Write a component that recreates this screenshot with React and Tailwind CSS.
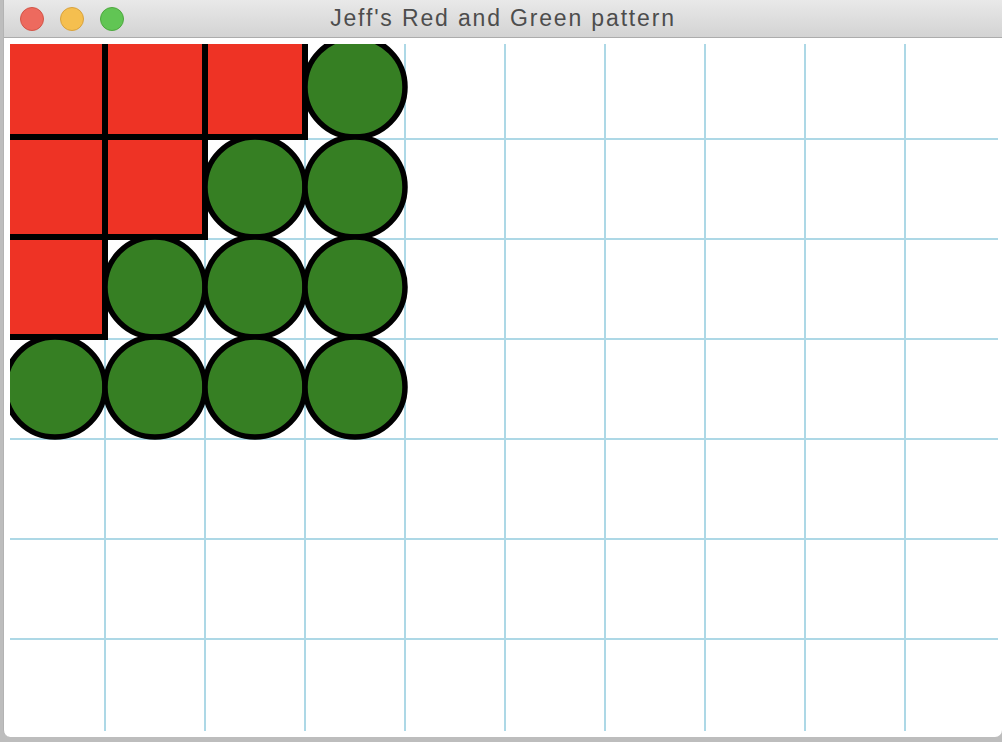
import React from 'react';

const CELL = 100;

// red where row + col <= 2, green circles elsewhere (4x4 block)
const shapes = [];
for (let r = 0; r < 4; r++) {
  for (let c = 0; c < 4; c++) {
    shapes.push({ r, c, red: r + c <= 2 });
  }
}

const TrafficLight = ({ fill, ring }) => (
  <span
    className="block w-[24px] h-[24px] rounded-full border"
    style={{ backgroundColor: fill, borderColor: ring }}
  />
);

const PatternCanvas = () => (
  <svg width="988" height="687" viewBox="5 5 988 687" className="block">
    {[1, 2, 3, 4, 5, 6, 7, 8, 9].map((k) => (
      <line key={'v' + k} x1={k * CELL} y1="0" x2={k * CELL} y2="700" stroke="#add8e6" strokeWidth="2" />
    ))}
    {[1, 2, 3, 4, 5, 6].map((k) => (
      <line key={'h' + k} x1="0" y1={k * CELL} x2="1000" y2={k * CELL} stroke="#add8e6" strokeWidth="2" />
    ))}
    {shapes.map(({ r, c, red }) =>
      red ? (
        <rect
          key={`${r}-${c}`}
          x={c * CELL}
          y={r * CELL - 2}
          width={CELL}
          height={CELL}
          fill="#ee3325"
          stroke="#000"
          strokeWidth="6"
        />
      ) : (
        <circle
          key={`${r}-${c}`}
          cx={c * CELL + 50}
          cy={r * CELL + 48}
          r="50"
          fill="#367f23"
          stroke="#000"
          strokeWidth="5.5"
        />
      )
    )}
  </svg>
);

export default function App() {
  return (
    <div className="w-[1002px] h-[742px] overflow-hidden bg-[#bdbdbd] pl-[3px] pb-[5px] flex">
      <div className="flex-1 flex flex-col bg-white border-l border-[#b3b3b3] rounded-b-[7px] overflow-hidden">
        <div className="h-[38px] shrink-0 grid grid-cols-[1fr_auto_1fr] items-center bg-linear-to-b from-[#e9e9e9] to-[#d3d3d3] border-b border-[#acacac]">
          <div className="flex items-center gap-[16px] pl-[16px]">
            <TrafficLight fill="#ed6a5e" ring="#d25548" />
            <TrafficLight fill="#f5bf4f" ring="#d8a23e" />
            <TrafficLight fill="#61c554" ring="#4ea83f" />
          </div>
          <h1 className="text-[23px] leading-none pb-[1px] text-[#4d4d4d] tracking-[0.08em] font-['Liberation_Sans',Arial,sans-serif] whitespace-nowrap">
            Jeff's Red and Green pattern
          </h1>
          <div />
        </div>
        <div className="flex-1 pl-[6px] pt-[6px]">
          <PatternCanvas />
        </div>
      </div>
    </div>
  );
}
